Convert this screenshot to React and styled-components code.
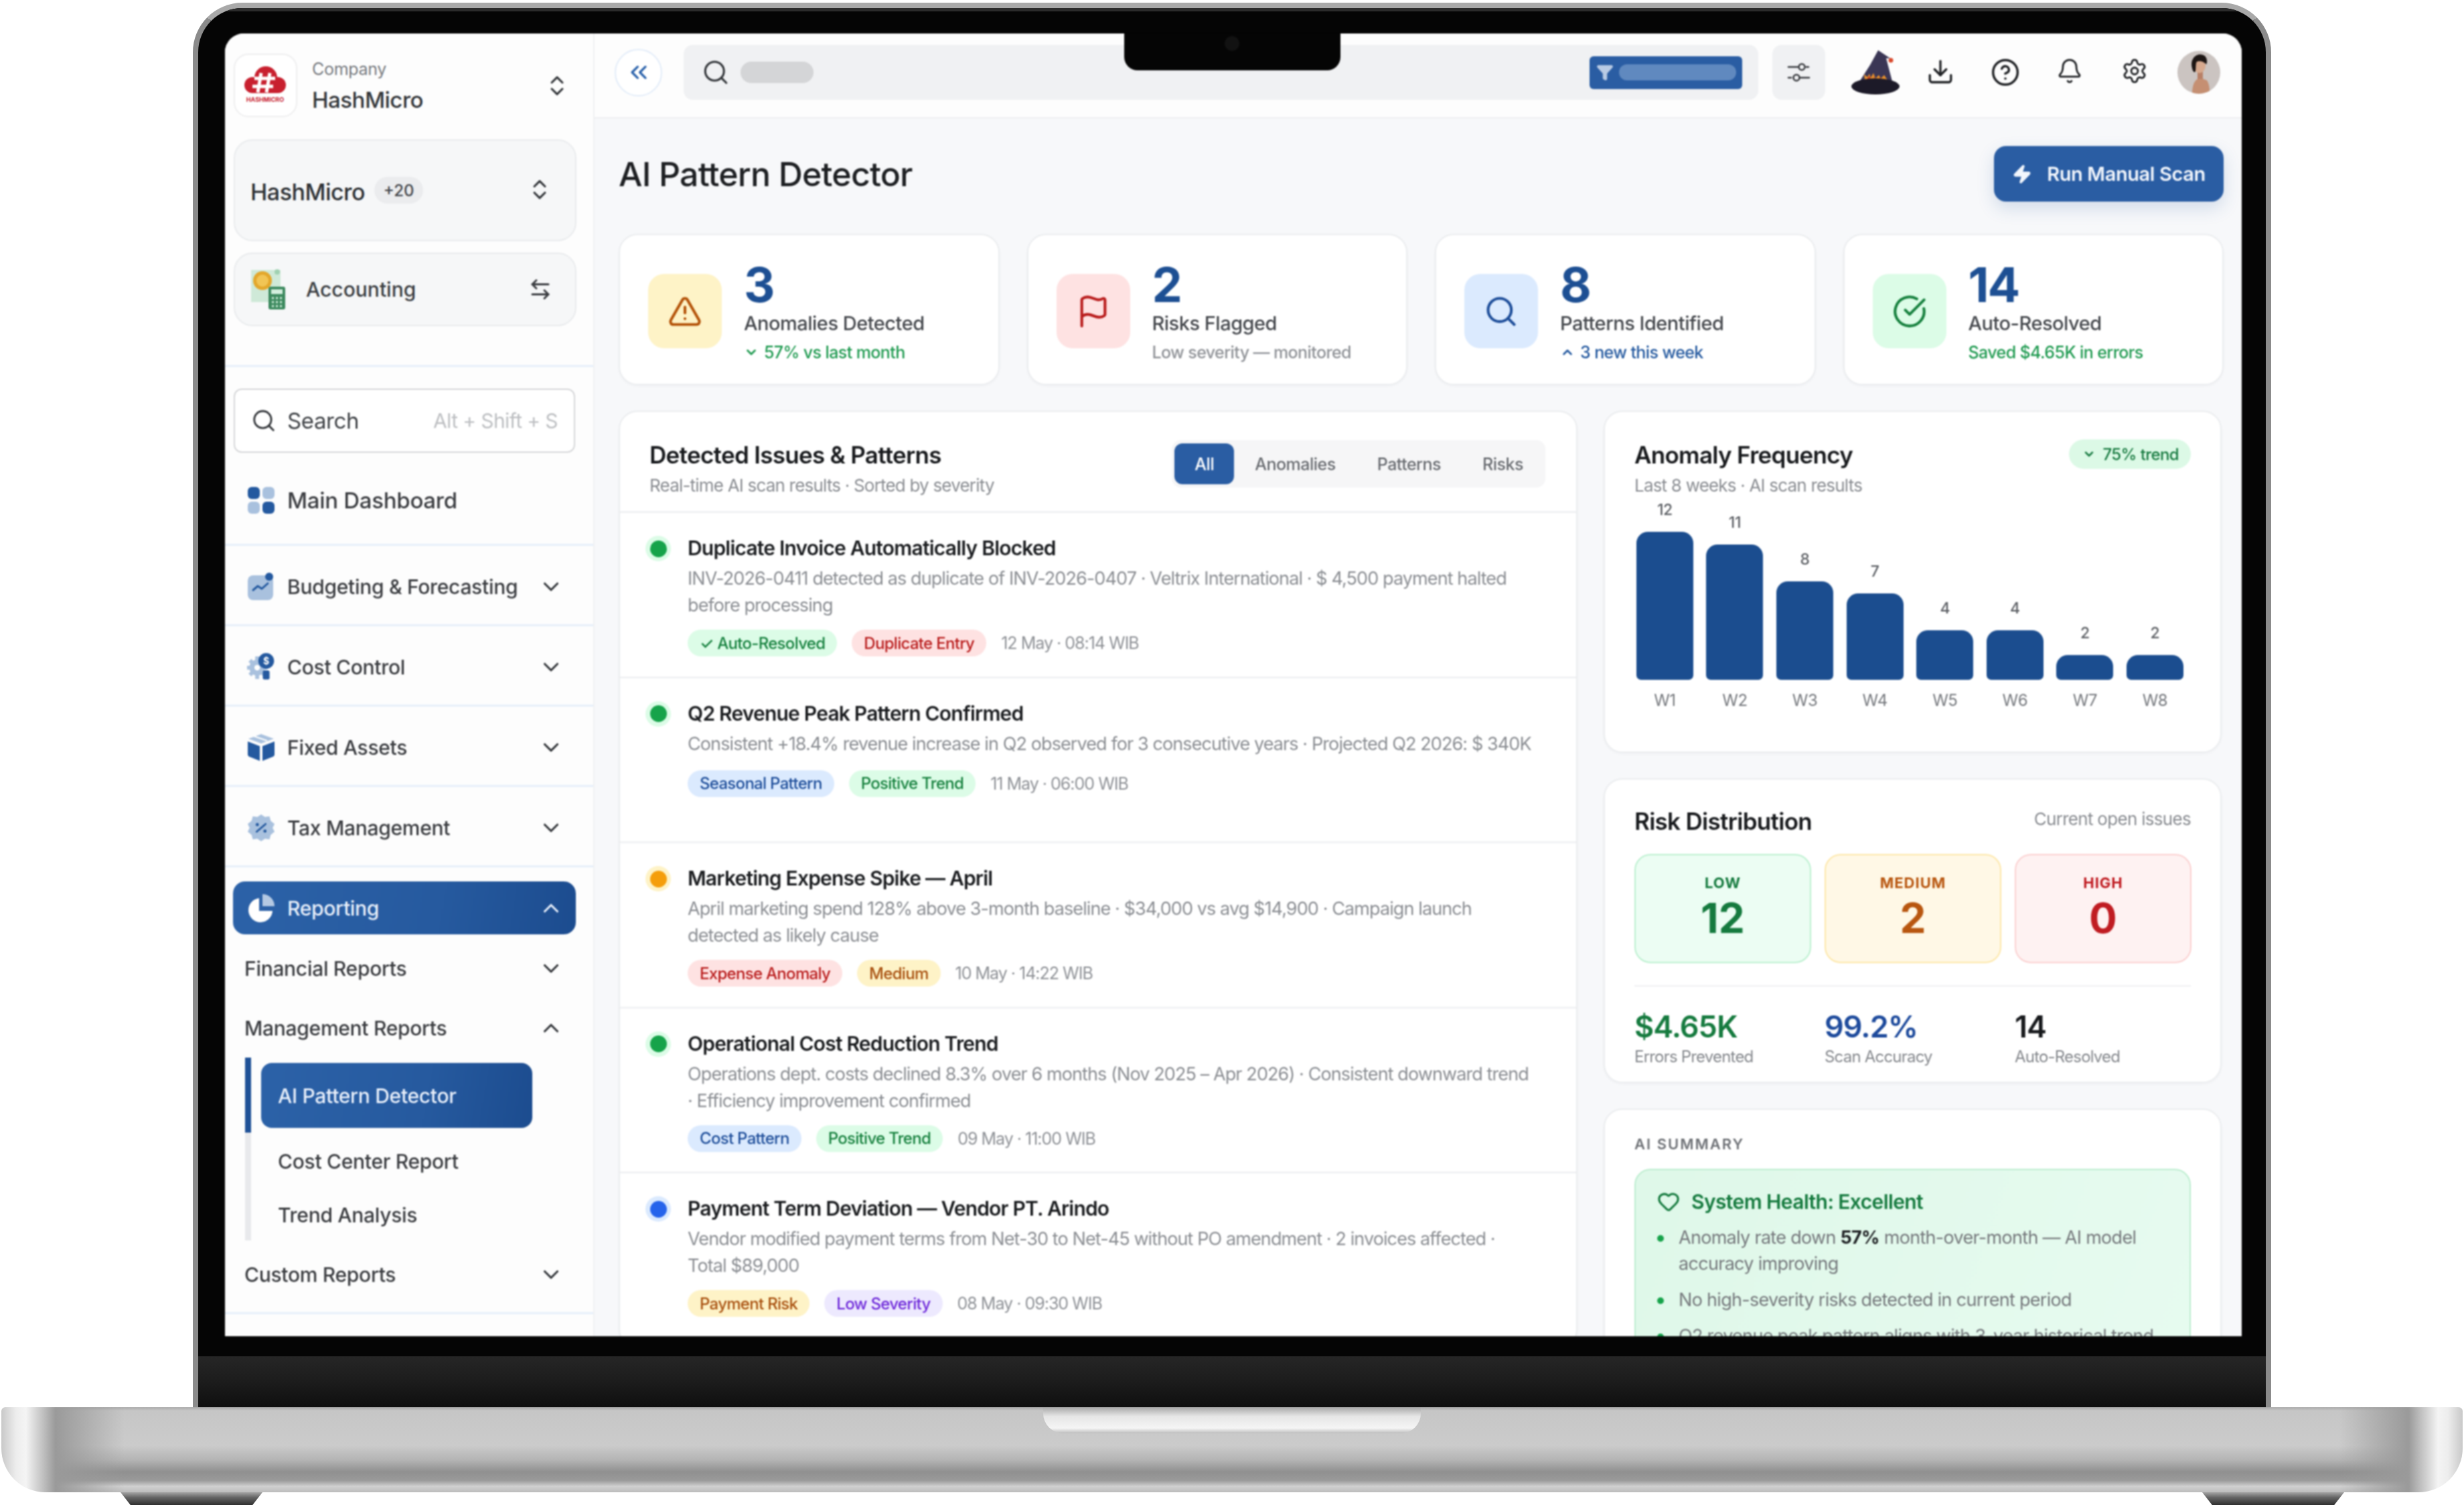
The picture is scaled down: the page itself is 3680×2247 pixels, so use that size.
import React from 'react';
import styled, { createGlobalStyle } from 'styled-components';
import {
  AlertTriangle, ArrowLeftRight, Bell, ChevronDown, ChevronUp, ChevronsLeft, ChevronsUpDown,
  CircleCheckBig, CircleHelp, Download, Filter, Flag, Heart, Search, Settings, Zap,
} from 'lucide-react';

const GlobalStyle = createGlobalStyle`
  html, body { margin: 0; padding: 0; background: #fff; }
  body { width: 3680px; height: 2247px; overflow: hidden; font-family: Inter, "Liberation Sans", sans-serif; }
  * { box-sizing: border-box; }
`;

// laptop frame
const Page = styled.div`
  width: 3680px;
  height: 2247px;
  display: flex;
  flex-direction: column;
  align-items: center;
  padding-top: 4px;
  background: #fff;
  overflow: hidden;
`;
const Lid = styled.div`
  width: 3104px;
  height: 2097px;
  flex: none;
  display: flex;
  flex-direction: column;
  background: #050505;
  border: 8px solid #8b8b8b;
  border-top-color: #a9a9a9;
  border-bottom: 0;
  border-radius: 74px 74px 0 0;
  overflow: hidden;
`;
const Bezel = styled.div`
  flex: none;
  padding: 38px 36px 30px 40px;
  box-shadow: inset 0 5px 0 #2b2b2b;
`;
const Chin = styled.div`
  flex: 1;
  background: linear-gradient(180deg, #262626 0%, #1c1c1c 50%, #0f0f0f 100%);
`;
const Screen = styled.div`
  position: relative;
  height: 1945px;
  display: flex;
  overflow: hidden;
  background: #fdfdfd;
  border-radius: 28px 28px 0 0;
  filter: blur(0.9px);
`;
const Notch = styled.div`
  position: absolute;
  top: 0;
  left: 1343px;
  width: 323px;
  height: 55px;
  z-index: 5;
  background: #050505;
  border-radius: 0 0 20px 20px;
  &::after {
    content: '';
    position: absolute;
    left: 150px;
    top: 4px;
    width: 22px;
    height: 22px;
    border-radius: 50%;
    background: #121212;
  }
`;
const Base = styled.div`
  position: relative;
  width: 3676px;
  height: 127px;
  flex: none;
  border-radius: 6px 6px 66px 66px;
  background:
    linear-gradient(90deg, #c9c9c9 0, #ededed 0.6%, #f4f4f4 1%, #9a9a9a 2.2%, rgba(150,150,150,0) 5%, rgba(150,150,150,0) 95%, #9a9a9a 97.8%, #f4f4f4 99%, #ededed 99.4%, #c9c9c9 100%),
    linear-gradient(180deg, #a9a9a9 0, #c6c6c6 4%, #cbcbcb 45%, #b4b4b4 62%, #909090 76%, #9a9a9a 86%, #d0d0d0 93%, #bdbdbd 100%);
`;
const BaseNotch = styled.div`
  position: absolute;
  top: 0;
  left: 1556px;
  width: 564px;
  height: 39px;
  border-radius: 0 0 30px 30px;
  background: linear-gradient(180deg, #a8a8a8 0, #e6e6e6 35%, #f5f5f5 80%, #bdbdbd 100%);
`;
const Feet = styled.div`
  width: 3680px;
  flex: none;
  display: flex;
  justify-content: space-between;
  padding: 0 179px 0 180px;
`;
const Foot = styled.div`
  width: 212px;
  height: 19px;
  clip-path: polygon(0 0, 100% 0, 93% 100%, 7% 100%);
  background: linear-gradient(180deg, #a5a5a5 0, #666 40%, #303030 100%);
`;

// sidebar
const Sidebar = styled.aside`
  width: 550px;
  flex: none;
  display: flex;
  flex-direction: column;
  padding-top: 30px;
  background: #fdfdfd;
`;
const CompanyRow = styled.div`
  display: flex;
  align-items: center;
  padding: 0 35px 0 13px;
`;
const LogoBox = styled.div`
  width: 95px;
  height: 95px;
  flex: none;
  background: #fff;
  border: 2px solid #eeeeef;
  border-radius: 22px;
`;
const CompanyText = styled.div`
  flex: 1;
  margin-left: 22px;
`;
const CompanyLabel = styled.div`
  font-size: 25px;
  line-height: 34px;
  color: #777a7f;
  letter-spacing: -0.3px;
`;
const CompanyName = styled.div`
  margin-top: 8px;
  font-size: 33px;
  line-height: 42px;
  font-weight: 500;
  color: #33363a;
  letter-spacing: -0.5px;
`;
const SwitchCard = styled.div`
  display: flex;
  align-items: ${(p) => (p.$tall ? 'flex-start' : 'center')};
  height: ${(p) => (p.$tall ? 152 : 110)}px;
  margin: ${(p) => (p.$tall ? '33px 25px 0 13px' : '17px 25px 0 13px')};
  padding: ${(p) => (p.$tall ? '54px 34px 0 23px' : '0 34px 0 24px')};
  background: #f6f7f8;
  border: 2px solid #e9ebed;
  border-radius: 28px;
`;
const SwitchName = styled.span`
  font-size: 34px;
  line-height: 46px;
  font-weight: 500;
  color: #2e3135;
  letter-spacing: -0.5px;
`;
const CountPill = styled.span`
  margin-left: 14px;
  width: 73px;
  height: 40px;
  display: flex;
  align-items: center;
  justify-content: center;
  font-size: 24px;
  font-weight: 500;
  color: #44474c;
  background: #ebecee;
  border-radius: 20px;
`;
const ModuleName = styled.span`
  margin-left: 30px;
  font-size: 30px;
  font-weight: 500;
  color: #3b3e42;
`;
const Grow = styled.div`
  flex: 1;
`;
const SidebarRule = styled.div`
  height: 3px;
  margin-top: 58px;
  background: #e6effa;
`;
const SearchBox = styled.div`
  display: flex;
  align-items: center;
  height: 96px;
  margin: 32px 27px 0 13px;
  padding: 0 24px 0 24px;
  background: #fff;
  border: 2px solid #d6d7d9;
  border-radius: 12px;
`;
const SearchText = styled.span`
  margin-left: 16px;
  font-size: 33px;
  color: #3f4246;
  letter-spacing: -0.4px;
`;
const SearchKeys = styled.span`
  margin-left: auto;
  font-size: 30px;
  color: #bdbfc2;
  letter-spacing: -0.6px;
`;
const NavRow = styled.div`
  display: flex;
  align-items: center;
  height: ${(p) => (p.$first ? 139 : 120)}px;
  padding: ${(p) => (p.$first ? '6px' : '4px')} 44px 0 33px;
  border-bottom: 3px solid #e6effa;
`;
const NavIcon = styled.span`
  width: 42px;
  height: 48px;
  flex: none;
  display: flex;
  align-items: center;
  justify-content: center;
`;
const NavLabel = styled.span`
  flex: 1;
  margin-left: 18px;
  font-size: ${(p) => (p.$big ? 33 : 30)}px;
  font-weight: 500;
  color: ${(p) => (p.$light ? '#e6eefa' : '#3a3c40')};
  letter-spacing: -0.3px;
`;
const ReportingRow = styled.div`
  display: flex;
  align-items: center;
  height: 79px;
  margin: 21px 26px 0 12px;
  padding: 0 18px 0 21px;
  background: linear-gradient(100deg, #2c62a8 0%, #265a9f 60%, #1c4c8f 100%);
  border-radius: 18px;
`;
const SubRow = styled.div`
  display: flex;
  align-items: center;
  height: 89px;
  padding: 0 44px 0 29px;
  margin-top: ${(p) => p.$top || 0}px;
  font-size: 30px;
  font-weight: 500;
  color: #3a3c40;
  letter-spacing: -0.3px;
  span { flex: 1; }
`;
const SubMenu = styled.div`
  display: flex;
  margin-left: 30px;
  height: 279px;
`;
const Rail = styled.div`
  width: 9px;
  height: 273px;
  background: #e8e9ec;
  &::before {
    content: '';
    display: block;
    height: 112px;
    background: #1f5197;
  }
`;
const SubItems = styled.div`
  margin-left: 15px;
  padding-top: 8px;
  width: 405px;
`;
const SubItem = styled.div`
  display: flex;
  align-items: center;
  height: ${(p) => (p.$active ? 97 : 80)}px;
  margin-bottom: ${(p) => (p.$active ? 10 : 0)}px;
  padding-left: 25px;
  font-size: 30px;
  font-weight: 500;
  letter-spacing: -0.3px;
  color: ${(p) => (p.$active ? '#e9f0fb' : '#3a3c40')};
  background: ${(p) => (p.$active ? 'linear-gradient(100deg, #2c62a8 0%, #265a9f 60%, #1c4c8f 100%)' : 'none')};
  border-radius: 16px;
`;

// top bar
const Main = styled.main`
  flex: 1;
  min-width: 0;
  display: flex;
  flex-direction: column;
  background: #f7f8fa;
  border-left: 2px solid #f0f1f3;
`;
const TopBar = styled.header`
  height: 127px;
  flex: none;
  display: flex;
  align-items: center;
  padding: 0 30px 9px 30px;
  background: #fdfdfd;
  border-bottom: 2px solid #eeeff1;
`;
const CollapseButton = styled.div`
  width: 71px;
  height: 71px;
  flex: none;
  display: flex;
  align-items: center;
  justify-content: center;
  background: #fff;
  border: 2px solid #e2ecf9;
  border-radius: 50%;
  color: #2a62ab;
`;
const GlobalSearch = styled.div`
  width: 1605px;
  height: 82px;
  flex: none;
  display: flex;
  align-items: center;
  margin-left: 32px;
  padding: 0 24px 0 27px;
  background: #f0f1f3;
  border-radius: 14px;
  color: #33363a;
`;
const Skeleton = styled.div`
  width: 109px;
  height: 32px;
  margin-left: 16px;
  background: #d4d5d7;
  border-radius: 16px;
`;
const FilterChip = styled.div`
  width: 228px;
  height: 49px;
  margin-left: auto;
  display: flex;
  align-items: center;
  padding: 0 9px 0 10px;
  background: #2a5da3;
  border-radius: 6px;
  color: #b9cbe4;
`;
const FilterBar = styled.div`
  flex: 1;
  height: 24px;
  margin-left: 8px;
  background: #6089bf;
  border-radius: 12px;
`;
const TuneButton = styled.div`
  width: 79px;
  height: 82px;
  flex: none;
  margin-left: 21px;
  display: flex;
  align-items: center;
  justify-content: center;
  background: #f0f1f3;
  border-radius: 14px;
  color: #3a3c40;
`;
const HatSlot = styled.div`
  width: 72px;
  height: 66px;
  flex: none;
  margin-left: 39px;
`;
const IconSlots = styled.div`
  display: flex;
  margin-left: 13px;
  color: #1f2124;
`;
const IconSlot = styled.div`
  width: 96.5px;
  display: flex;
  justify-content: center;
`;
const Avatar = styled.div`
  width: 64px;
  height: 64px;
  margin-left: 16px;
  flex: none;
  border-radius: 50%;
  overflow: hidden;
`;

// page content
const Content = styled.div`
  flex: 1;
  min-height: 0;
  padding: 41px 27px 0 36px;
`;
const TitleRow = styled.div`
  display: flex;
  align-items: center;
  justify-content: space-between;
  height: 83px;
`;
const PageTitle = styled.h1`
  margin: 0;
  font-size: 50px;
  font-weight: 500;
  color: #1d1f22;
  letter-spacing: -0.8px;
`;
const ScanButton = styled.button`
  width: 343px;
  height: 83px;
  display: flex;
  align-items: center;
  justify-content: center;
  gap: 22px;
  font-family: inherit;
  font-size: 29px;
  font-weight: 600;
  letter-spacing: -0.4px;
  color: #f2f6fc;
  background: #2a5da3;
  border: 0;
  border-radius: 18px;
  box-shadow: 0 10px 26px rgba(42, 93, 163, 0.18);
`;
const KpiGrid = styled.div`
  display: grid;
  grid-template-columns: repeat(4, 1fr);
  gap: 41px;
  margin-top: 48px;
`;
const KpiCard = styled.div`
  height: 226px;
  display: flex;
  padding: 58px 20px 0 42px;
  background: #fff;
  border: 2px solid #ebedef;
  border-radius: 28px;
  box-shadow: 0 2px 4px rgba(20, 30, 50, 0.03);
`;
const KpiIcon = styled.div`
  width: 110px;
  height: 111px;
  flex: none;
  display: flex;
  align-items: center;
  justify-content: center;
  border-radius: 24px;
  background: ${(p) => p.$bg};
  color: ${(p) => p.$fg};
`;
const KpiBody = styled.div`
  margin: -14px 0 0 33px;
`;
const KpiValue = styled.div`
  font-size: 72px;
  line-height: 60px;
  font-weight: 700;
  color: #1d4f93;
  letter-spacing: -2px;
`;
const KpiLabel = styled.div`
  margin-top: 10px;
  font-size: 29px;
  line-height: 36px;
  font-weight: 500;
  color: #45484d;
  letter-spacing: -0.5px;
  white-space: nowrap;
`;
const KpiNote = styled.div`
  margin-top: 10px;
  display: flex;
  align-items: center;
  gap: 8px;
  font-size: 25px;
  line-height: 30px;
  font-weight: 500;
  letter-spacing: -0.6px;
  white-space: nowrap;
  color: ${(p) => p.$color};
`;
const Columns = styled.div`
  display: grid;
  grid-template-columns: 1432px 923px;
  gap: 39px;
  margin-top: 38px;
`;
const Panel = styled.section`
  background: #fff;
  border: 2px solid #ebedef;
  border-radius: 28px;
  box-shadow: 0 2px 4px rgba(20, 30, 50, 0.03);
`;
const IssuesPanel = styled(Panel)`
  height: 1400px;
`;
const IssuesHeader = styled.div`
  height: 151px;
  display: flex;
  justify-content: space-between;
  padding: 44px 46px 0 44px;
  border-bottom: 3px solid #f0f1f3;
`;
const PanelTitle = styled.h2`
  margin: 0;
  font-size: 35px;
  line-height: 40px;
  font-weight: 600;
  color: #17191c;
  letter-spacing: -0.7px;
`;
const PanelSub = styled.div`
  margin-top: 8px;
  font-size: 26px;
  line-height: 36px;
  color: #8a8d92;
  letter-spacing: -0.8px;
`;
const Tabs = styled.div`
  height: 71px;
  margin-top: -2px;
  display: flex;
  align-items: center;
  padding: 0 2px 0 4px;
  background: #f6f6f7;
  border-radius: 14px;
`;
const Tab = styled.div`
  height: 61px;
  display: flex;
  align-items: center;
  padding: 0 ${(p) => (p.$active ? 30 : 31)}px;
  font-size: 25px;
  font-weight: 500;
  letter-spacing: -0.5px;
  color: ${(p) => (p.$active ? '#fff' : '#6a6d72')};
  background: ${(p) => (p.$active ? '#2a5da3' : 'none')};
  border-radius: 12px;
`;
const IssueRow = styled.div`
  height: 246.5px;
  display: flex;
  padding: 32px 30px 0 38px;
  border-bottom: 3px solid #f1f2f4;
`;
const Dot = styled.span`
  width: 38px;
  height: 38px;
  flex: none;
  margin-top: 2px;
  display: flex;
  align-items: center;
  justify-content: center;
  border-radius: 50%;
  background: ${(p) => p.$halo};
  &::before {
    content: '';
    width: 25px;
    height: 25px;
    border-radius: 50%;
    background: ${(p) => p.$color};
  }
`;
const IssueBody = styled.div`
  margin-left: 25px;
  min-width: 0;
`;
const IssueTitle = styled.div`
  font-size: 30px;
  line-height: 40px;
  font-weight: 600;
  color: #1a1c1f;
  letter-spacing: -0.8px;
`;
const IssueDesc = styled.div`
  margin-top: 6px;
  font-size: 27px;
  line-height: 40px;
  color: #8b8e93;
  letter-spacing: -0.9px;
  white-space: nowrap;
`;
const TagRow = styled.div`
  display: flex;
  align-items: center;
  gap: 22px;
  margin-top: ${(p) => p.$top}px;
`;
const Tag = styled.span`
  height: 40px;
  display: flex;
  align-items: center;
  padding: 0 18px;
  font-size: 24px;
  font-weight: 500;
  letter-spacing: -0.7px;
  border-radius: 20px;
  white-space: nowrap;
  background: ${(p) => p.$bg};
  color: ${(p) => p.$fg};
`;
const IssueTime = styled.span`
  font-size: 25px;
  letter-spacing: -1px;
  color: #8f9297;
`;
const SideColumn = styled.div`
  display: flex;
  flex-direction: column;
  gap: 38px;
`;
const ChartPanel = styled(Panel)`
  height: 511px;
  padding: 44px 44px 0 44px;
`;
const PanelHead = styled.div`
  display: flex;
  justify-content: space-between;
  align-items: flex-start;
`;
const TrendPill = styled.span`
  height: 44px;
  margin-top: -3px;
  display: flex;
  align-items: center;
  gap: 10px;
  padding: 0 18px 0 20px;
  font-size: 24px;
  font-weight: 500;
  letter-spacing: -0.6px;
  color: #177a40;
  background: #dcf9e6;
  border-radius: 22px;
`;
const Chart = styled.div`
  display: grid;
  grid-template-columns: repeat(8, 104.6px);
  margin: 0 0 0 -7px;
`;
const ChartCol = styled.div`
  height: ${(p) => p.$tall || 328}px;
  display: flex;
  flex-direction: column;
  align-items: center;
  justify-content: flex-end;
`;
const BarValue = styled.div`
  margin-bottom: 19px;
  font-size: 23px;
  line-height: 28px;
  font-weight: 500;
  color: #5d6065;
  letter-spacing: -0.5px;
`;
const Bar = styled.div`
  width: 85px;
  height: ${(p) => p.$h}px;
  background: #1b4d8f;
  border-radius: 17px 17px 7px 7px;
`;
const WeekLabel = styled.div`
  margin-top: 17px;
  font-size: 24px;
  line-height: 28px;
  color: #76797e;
  letter-spacing: -0.6px;
`;
const RiskPanel = styled(Panel)`
  height: 455px;
  padding: 42px 44px 0 44px;
`;
const RiskNote = styled.div`
  font-size: 26px;
  line-height: 34px;
  color: #8a8d92;
  letter-spacing: -0.7px;
`;
const RiskBoxes = styled.div`
  display: grid;
  grid-template-columns: repeat(3, 264px);
  gap: 20px;
  margin-top: 29px;
`;
const RiskBox = styled.div`
  height: 163px;
  padding-top: 28px;
  text-align: center;
  background: ${(p) => p.$bg};
  border: 2px solid ${(p) => p.$line};
  border-radius: 24px;
  color: ${(p) => p.$fg};
`;
const RiskLabel = styled.div`
  font-size: 22px;
  line-height: 26px;
  font-weight: 700;
  letter-spacing: 1px;
`;
const RiskValue = styled.div`
  margin-top: 4px;
  font-size: 62px;
  line-height: 72px;
  font-weight: 700;
`;
const StatsRow = styled.div`
  display: grid;
  grid-template-columns: repeat(3, 264px);
  gap: 20px;
  margin-top: 33px;
  padding-top: 32px;
  border-top: 2px solid #eff0f2;
`;
const StatValue = styled.div`
  font-size: 45px;
  line-height: 56px;
  font-weight: 600;
  letter-spacing: -1px;
  color: ${(p) => p.$color};
`;
const StatLabel = styled.div`
  margin-top: 2px;
  font-size: 24px;
  line-height: 30px;
  color: #85888d;
  letter-spacing: -0.8px;
`;
const SummaryPanel = styled(Panel)`
  height: 400px;
  padding: 37px 44px 0 44px;
`;
const SummaryLabel = styled.div`
  font-size: 22px;
  line-height: 28px;
  font-weight: 600;
  letter-spacing: 2px;
  color: #6e7176;
`;
const SummaryBox = styled.div`
  margin-top: 23px;
  height: 320px;
  padding: 27px 30px 0 32px;
  background: linear-gradient(110deg, #dff8e9 0%, #e7fbf0 100%);
  border: 2px solid #bcedcf;
  border-radius: 24px;
`;
const SummaryHead = styled.div`
  display: flex;
  align-items: center;
  gap: 17px;
  font-size: 30px;
  line-height: 40px;
  font-weight: 600;
  letter-spacing: -0.6px;
  color: #157a3e;
`;
const SummaryList = styled.ul`
  margin: 14px 0 0;
  padding: 0;
  list-style: none;
`;
const SummaryItem = styled.li`
  position: relative;
  padding-left: 32px;
  margin-bottom: 15px;
  font-size: 27px;
  line-height: 39px;
  color: #75787c;
  letter-spacing: -0.7px;
  &::before {
    content: '';
    position: absolute;
    left: 0;
    top: 16px;
    width: 10px;
    height: 10px;
    border-radius: 50%;
    background: #16a34a;
  }
  b {
    font-weight: 700;
    color: #1d1f22;
  }
`;

// drawn icons
const HashLogo = () => (
  <svg width="91" height="91" viewBox="0 0 91 91">
    <g fill="#c8202f">
      <circle cx="46" cy="34" r="17" />
      <circle cx="26" cy="45" r="12" />
      <circle cx="64" cy="45" r="12" />
      <rect x="26" y="38" width="38" height="19" />
    </g>
    <path d="M39 27 34 56M52 27 47 56M29 35h31M26 47h31" stroke="#fff" strokeWidth="5" fill="none" />
    <text x="45" y="70" textAnchor="middle" fontFamily="Inter, sans-serif" fontSize="9" fontWeight="700" fill="#c8202f">HASHMICRO</text>
  </svg>
);
const AccountingIcon = () => (
  <svg width="52" height="62" viewBox="0 0 52 62">
    <rect x="0" y="2" width="44" height="48" fill="#cfe9d8" />
    <circle cx="39" cy="5" r="4" fill="#9fd1b1" />
    <circle cx="17" cy="18" r="14" fill="#e3a72b" />
    <circle cx="17" cy="18" r="9" fill="#f1c555" />
    <rect x="26" y="27" width="25" height="34" rx="3" fill="#3d8a5f" />
    <rect x="30" y="31" width="17" height="7" fill="#d5efdf" />
    <path d="M31 44h3M37 44h3M43 44h3M31 50h3M37 50h3M43 50h3M31 56h3M37 56h3M43 56h3" stroke="#cdebd9" strokeWidth="3" />
  </svg>
);
const DashboardIcon = () => (
  <svg width="42" height="42" viewBox="0 0 42 42">
    <rect x="1" y="1" width="18" height="18" rx="6" fill="#24599f" />
    <rect x="23" y="1" width="18" height="18" rx="6" fill="#a9c1de" />
    <rect x="1" y="23" width="18" height="18" rx="6" fill="#a9c1de" />
    <rect x="23" y="23" width="18" height="18" rx="6" fill="#24599f" />
  </svg>
);
const BudgetIcon = () => (
  <svg width="42" height="42" viewBox="0 0 42 42">
    <rect x="1" y="4" width="38" height="37" rx="8" fill="#a9c1de" />
    <circle cx="33" cy="6" r="6" fill="#24599f" />
    <path d="M9 26l7-6 6 4 9-8" stroke="#24599f" strokeWidth="3" fill="none" strokeLinecap="round" strokeLinejoin="round" />
  </svg>
);
const CostIcon = () => (
  <svg width="50" height="50" viewBox="0 0 50 50">
    <circle cx="18" cy="26" r="14" fill="#a9c1de" />
    <path d="M18 6v40M0 26h36M5 13l26 26M31 13 5 39" stroke="#a9c1de" strokeWidth="7" />
    <circle cx="18" cy="26" r="5" fill="#fff" />
    <circle cx="34" cy="14" r="14" fill="#24599f" />
    <text x="34" y="20" textAnchor="middle" fontFamily="Inter, sans-serif" fontSize="17" fontWeight="700" fill="#fff">$</text>
    <rect x="28" y="31" width="12" height="16" rx="3" fill="#24599f" />
  </svg>
);
const AssetIcon = () => (
  <svg width="42" height="42" viewBox="0 0 42 42">
    <path d="M21 1 40 8 21 15 2 8z" fill="#a9c1de" />
    <path d="M1 12 19 19v22L4 35q-3-1-3-4z" fill="#24599f" />
    <path d="M41 12 23 19v22l15-6q3-1 3-4z" fill="#24599f" />
    <path d="M10 4l20 7" stroke="#fff" strokeWidth="2" />
  </svg>
);
const TaxIcon = () => (
  <svg width="44" height="44" viewBox="0 0 44 44">
    <path d="M22 1l6 4 7-1 2 7 6 5-3 6 3 6-6 5-2 7-7-1-6 4-6-4-7 1-2-7-6-5 3-6-3-6 6-5 2-7 7 1z" fill="#a9c1de" />
    <path d="M15 28 29 16" stroke="#24599f" strokeWidth="3" strokeLinecap="round" />
    <circle cx="16" cy="17" r="2.5" fill="#24599f" />
    <circle cx="28" cy="27" r="2.5" fill="#24599f" />
  </svg>
);
const PieIcon = () => (
  <svg width="42" height="42" viewBox="0 0 42 42">
    <path d="M18 6v19h20A18 18 0 1 1 18 6z" fill="#fff" />
    <path d="M23 0a18 18 0 0 1 18 18H23z" fill="#b4c9e3" />
  </svg>
);
const TuneIcon = () => (
  <svg width="36" height="36" viewBox="0 0 36 36" fill="none" stroke="currentColor" strokeWidth="2.6" strokeLinecap="round">
    <circle cx="22" cy="10" r="4.5" />
    <circle cx="14" cy="26" r="4.5" />
    <path d="M2 10h14M29 10h3M2 26h4M20 26h13" />
  </svg>
);
const WizardHat = () => (
  <svg width="72" height="66" viewBox="0 0 72 66">
    <path d="M40 0 58 12 52 12 62 50H10L28 22z" fill="#3a3655" />
    <circle cx="59" cy="15" r="3.5" fill="#d9472b" />
    <path d="M19 36l5 4 3-5 2 6 4-7 3 8 5-5 3 5 5-5 4 6 2 6-34 2z" fill="#e8902c" />
    <path d="M24 42l3-4 2 5h6l-2-5 4 6 6-1-1-3 4 4-4 3H24z" fill="#c83a22" />
    <ellipse cx="36" cy="54" rx="36" ry="12" fill="#1c1a28" />
  </svg>
);
const Portrait = () => (
  <svg width="64" height="64" viewBox="0 0 64 64">
    <rect width="64" height="64" fill="#cbc4c1" />
    <path d="M22 64c0-14 4-22 12-24l10 4c4 6 4 14 4 20z" fill="#c58f72" />
    <path d="M30 30v12h8V30z" fill="#b98066" />
    <ellipse cx="33" cy="22" rx="9" ry="11" fill="#d7a98e" />
    <path d="M22 26C18 10 30 3 38 6c7 2 7 12 5 14-4-4-9-6-14-4-2 3-1 8-2 14-1 3-4 2-5-4z" fill="#1d1614" />
  </svg>
);

const navItems = [
  { label: 'Budgeting & Forecasting', icon: <BudgetIcon /> },
  { label: 'Cost Control', icon: <CostIcon /> },
  { label: 'Fixed Assets', icon: <AssetIcon /> },
  { label: 'Tax Management', icon: <TaxIcon /> },
];

const kpis = [
  { value: '3', label: 'Anomalies Detected', note: '57% vs last month', color: '#1f9a50', Icon: AlertTriangle, bg: '#fef3c7', fg: '#b45309', chevron: 'down' },
  { value: '2', label: 'Risks Flagged', note: 'Low severity — monitored', color: '#8f9297', Icon: Flag, bg: '#fee2e2', fg: '#b91c1c' },
  { value: '8', label: 'Patterns Identified', note: '3 new this week', color: '#24599f', Icon: Search, bg: '#dbeafe', fg: '#1e4e9a', chevron: 'up' },
  { value: '14', label: 'Auto-Resolved', note: 'Saved $4.65K in errors', color: '#1f9a50', Icon: CircleCheckBig, bg: '#dcfce7', fg: '#15803d' },
];

const tones = {
  green: { bg: '#dcfce7', fg: '#15803d' },
  red: { bg: '#fee2e2', fg: '#b91c1c' },
  blue: { bg: '#dbeafe', fg: '#1e4e9a' },
  amber: { bg: '#fef3c7', fg: '#a8500f' },
  purple: { bg: '#ede9fe', fg: '#6d28d9' },
};

const dots = {
  green: { color: '#16a34a', halo: '#dcfce7' },
  amber: { color: '#f59e0b', halo: '#fef3c7' },
  blue: { color: '#2563eb', halo: '#dbeafe' },
};

const issues = [
  {
    dot: 'green',
    title: 'Duplicate Invoice Automatically Blocked',
    lines: ['INV-2026-0411 detected as duplicate of INV-2026-0407 · Veltrix International · $ 4,500 payment halted', 'before processing'],
    tags: [['✓ Auto-Resolved', 'green'], ['Duplicate Entry', 'red']],
    time: '12 May · 08:14 WIB',
  },
  {
    dot: 'green',
    title: 'Q2 Revenue Peak Pattern Confirmed',
    lines: ['Consistent +18.4% revenue increase in Q2 observed for 3 consecutive years · Projected Q2 2026: $ 340K'],
    tags: [['Seasonal Pattern', 'blue'], ['Positive Trend', 'green']],
    time: '11 May · 06:00 WIB',
  },
  {
    dot: 'amber',
    title: 'Marketing Expense Spike — April',
    lines: ['April marketing spend 128% above 3-month baseline · $34,000 vs avg $14,900 · Campaign launch', 'detected as likely cause'],
    tags: [['Expense Anomaly', 'red'], ['Medium', 'amber']],
    time: '10 May · 14:22 WIB',
  },
  {
    dot: 'green',
    title: 'Operational Cost Reduction Trend',
    lines: ['Operations dept. costs declined 8.3% over 6 months (Nov 2025 – Apr 2026) · Consistent downward trend', '· Efficiency improvement confirmed'],
    tags: [['Cost Pattern', 'blue'], ['Positive Trend', 'green']],
    time: '09 May · 11:00 WIB',
  },
  {
    dot: 'blue',
    title: 'Payment Term Deviation — Vendor PT. Arindo',
    lines: ['Vendor modified payment terms from Net-30 to Net-45 without PO amendment · 2 invoices affected ·', 'Total $89,000'],
    tags: [['Payment Risk', 'amber'], ['Low Severity', 'purple']],
    time: '08 May · 09:30 WIB',
  },
];

const weeks = [12, 11, 8, 7, 4, 4, 2, 2];

const risks = [
  { label: 'LOW', value: '12', bg: '#ecfdf3', line: '#bbf0cf', fg: '#157a3e' },
  { label: 'MEDIUM', value: '2', bg: '#fff8e6', line: '#fde7a8', fg: '#b8560f' },
  { label: 'HIGH', value: '0', bg: '#fef2f2', line: '#fbd0d0', fg: '#c01c22' },
];

const stats = [
  { value: '$4.65K', label: 'Errors Prevented', color: '#157a3e' },
  { value: '99.2%', label: 'Scan Accuracy', color: '#1d4a9c' },
  { value: '14', label: 'Auto-Resolved', color: '#17191c' },
];

const App = () => (
  <Page>
    <GlobalStyle />
    <Lid>
      <Bezel>
        <Screen>
          <Notch />
          <Sidebar>
            <CompanyRow>
              <LogoBox><HashLogo /></LogoBox>
              <CompanyText>
                <CompanyLabel>Company</CompanyLabel>
                <CompanyName>HashMicro</CompanyName>
              </CompanyText>
              <ChevronsUpDown size={38} strokeWidth={2} color="#33363a" />
            </CompanyRow>
            <SwitchCard $tall>
              <SwitchName>HashMicro</SwitchName>
              <CountPill>+20</CountPill>
              <Grow />
              <ChevronsUpDown size={38} strokeWidth={2} color="#33363a" />
            </SwitchCard>
            <SwitchCard>
              <AccountingIcon />
              <ModuleName>Accounting</ModuleName>
              <Grow />
              <ArrowLeftRight size={36} strokeWidth={2} color="#3a3c40" />
            </SwitchCard>
            <SidebarRule />
            <SearchBox>
              <Search size={38} strokeWidth={1.8} color="#33363a" />
              <SearchText>Search</SearchText>
              <SearchKeys>Alt + Shift + S</SearchKeys>
            </SearchBox>
            <NavRow $first>
              <NavIcon><DashboardIcon /></NavIcon>
              <NavLabel $big>Main Dashboard</NavLabel>
            </NavRow>
            {navItems.map((item) => (
              <NavRow key={item.label}>
                <NavIcon>{item.icon}</NavIcon>
                <NavLabel>{item.label}</NavLabel>
                <ChevronDown size={38} strokeWidth={2} color="#33363a" />
              </NavRow>
            ))}
            <ReportingRow>
              <NavIcon><PieIcon /></NavIcon>
              <NavLabel $light>Reporting</NavLabel>
              <ChevronUp size={38} strokeWidth={2} color="#e6eefa" />
            </ReportingRow>
            <SubRow $top={6}>
              <span>Financial Reports</span>
              <ChevronDown size={38} strokeWidth={2} color="#33363a" />
            </SubRow>
            <SubRow>
              <span>Management Reports</span>
              <ChevronUp size={38} strokeWidth={2} color="#33363a" />
            </SubRow>
            <SubMenu>
              <Rail />
              <SubItems>
                <SubItem $active>AI Pattern Detector</SubItem>
                <SubItem>Cost Center Report</SubItem>
                <SubItem>Trend Analysis</SubItem>
              </SubItems>
            </SubMenu>
            <SubRow>
              <span>Custom Reports</span>
              <ChevronDown size={38} strokeWidth={2} color="#33363a" />
            </SubRow>
            <SidebarRule style={{ marginTop: 12 }} />
          </Sidebar>

          <Main>
            <TopBar>
              <CollapseButton><ChevronsLeft size={40} strokeWidth={2} /></CollapseButton>
              <GlobalSearch>
                <Search size={42} strokeWidth={1.8} />
                <Skeleton />
                <FilterChip>
                  <Filter size={26} fill="currentColor" />
                  <FilterBar />
                </FilterChip>
              </GlobalSearch>
              <TuneButton><TuneIcon /></TuneButton>
              <HatSlot><WizardHat /></HatSlot>
              <IconSlots>
                <IconSlot><Download size={42} strokeWidth={1.9} /></IconSlot>
                <IconSlot><CircleHelp size={44} strokeWidth={1.9} /></IconSlot>
                <IconSlot><Bell size={40} strokeWidth={1.7} /></IconSlot>
                <IconSlot><Settings size={40} strokeWidth={1.7} /></IconSlot>
              </IconSlots>
              <Avatar><Portrait /></Avatar>
            </TopBar>

            <Content>
              <TitleRow>
                <PageTitle>AI Pattern Detector</PageTitle>
                <ScanButton><Zap size={30} fill="currentColor" />Run Manual Scan</ScanButton>
              </TitleRow>

              <KpiGrid>
                {kpis.map(({ Icon, ...kpi }) => (
                  <KpiCard key={kpi.label}>
                    <KpiIcon $bg={kpi.bg} $fg={kpi.fg}><Icon size={52} strokeWidth={1.9} /></KpiIcon>
                    <KpiBody>
                      <KpiValue>{kpi.value}</KpiValue>
                      <KpiLabel>{kpi.label}</KpiLabel>
                      <KpiNote $color={kpi.color}>
                        {kpi.chevron === 'down' && <ChevronDown size={22} strokeWidth={3} />}
                        {kpi.chevron === 'up' && <ChevronUp size={22} strokeWidth={3} />}
                        {kpi.note}
                      </KpiNote>
                    </KpiBody>
                  </KpiCard>
                ))}
              </KpiGrid>

              <Columns>
                <IssuesPanel>
                  <IssuesHeader>
                    <div>
                      <PanelTitle>Detected Issues &amp; Patterns</PanelTitle>
                      <PanelSub>Real-time AI scan results · Sorted by severity</PanelSub>
                    </div>
                    <Tabs>
                      <Tab $active>All</Tab>
                      <Tab>Anomalies</Tab>
                      <Tab>Patterns</Tab>
                      <Tab>Risks</Tab>
                    </Tabs>
                  </IssuesHeader>
                  {issues.map((issue) => (
                    <IssueRow key={issue.title}>
                      <Dot $color={dots[issue.dot].color} $halo={dots[issue.dot].halo} />
                      <IssueBody>
                        <IssueTitle>{issue.title}</IssueTitle>
                        <IssueDesc>
                          {issue.lines.map((line) => <div key={line}>{line}</div>)}
                        </IssueDesc>
                        <TagRow $top={issue.lines.length === 2 ? 16 : 19}>
                          {issue.tags.map(([text, tone]) => (
                            <Tag key={text} $bg={tones[tone].bg} $fg={tones[tone].fg}>{text}</Tag>
                          ))}
                          <IssueTime>{issue.time}</IssueTime>
                        </TagRow>
                      </IssueBody>
                    </IssueRow>
                  ))}
                </IssuesPanel>

                <SideColumn>
                  <ChartPanel>
                    <PanelHead>
                      <div>
                        <PanelTitle>Anomaly Frequency</PanelTitle>
                        <PanelSub>Last 8 weeks · AI scan results</PanelSub>
                      </div>
                      <TrendPill><ChevronDown size={20} strokeWidth={3} />75% trend</TrendPill>
                    </PanelHead>
                    <Chart>
                      {weeks.map((count, i) => (
                        <ChartCol key={i} $tall={272}>
                          <BarValue>{count}</BarValue>
                          <Bar $h={count * 18.4} />
                        </ChartCol>
                      ))}
                      {weeks.map((_, i) => (
                        <ChartCol key={i} $tall={45}>
                          <WeekLabel>W{i + 1}</WeekLabel>
                        </ChartCol>
                      ))}
                    </Chart>
                  </ChartPanel>

                  <RiskPanel>
                    <PanelHead>
                      <PanelTitle>Risk Distribution</PanelTitle>
                      <RiskNote>Current open issues</RiskNote>
                    </PanelHead>
                    <RiskBoxes>
                      {risks.map((risk) => (
                        <RiskBox key={risk.label} $bg={risk.bg} $line={risk.line} $fg={risk.fg}>
                          <RiskLabel>{risk.label}</RiskLabel>
                          <RiskValue>{risk.value}</RiskValue>
                        </RiskBox>
                      ))}
                    </RiskBoxes>
                    <StatsRow>
                      {stats.map((stat) => (
                        <div key={stat.label}>
                          <StatValue $color={stat.color}>{stat.value}</StatValue>
                          <StatLabel>{stat.label}</StatLabel>
                        </div>
                      ))}
                    </StatsRow>
                  </RiskPanel>

                  <SummaryPanel>
                    <SummaryLabel>AI SUMMARY</SummaryLabel>
                    <SummaryBox>
                      <SummaryHead><Heart size={34} strokeWidth={2.2} />System Health: Excellent</SummaryHead>
                      <SummaryList>
                        <SummaryItem>Anomaly rate down <b>57%</b> month-over-month — AI model accuracy improving</SummaryItem>
                        <SummaryItem>No high-severity risks detected in current period</SummaryItem>
                        <SummaryItem>Q2 revenue peak pattern aligns with 3-year historical trend</SummaryItem>
                      </SummaryList>
                    </SummaryBox>
                  </SummaryPanel>
                </SideColumn>
              </Columns>
            </Content>
          </Main>
        </Screen>
      </Bezel>
      <Chin />
    </Lid>
    <Base><BaseNotch /></Base>
    <Feet><Foot /><Foot /></Feet>
  </Page>
);

export default App;
